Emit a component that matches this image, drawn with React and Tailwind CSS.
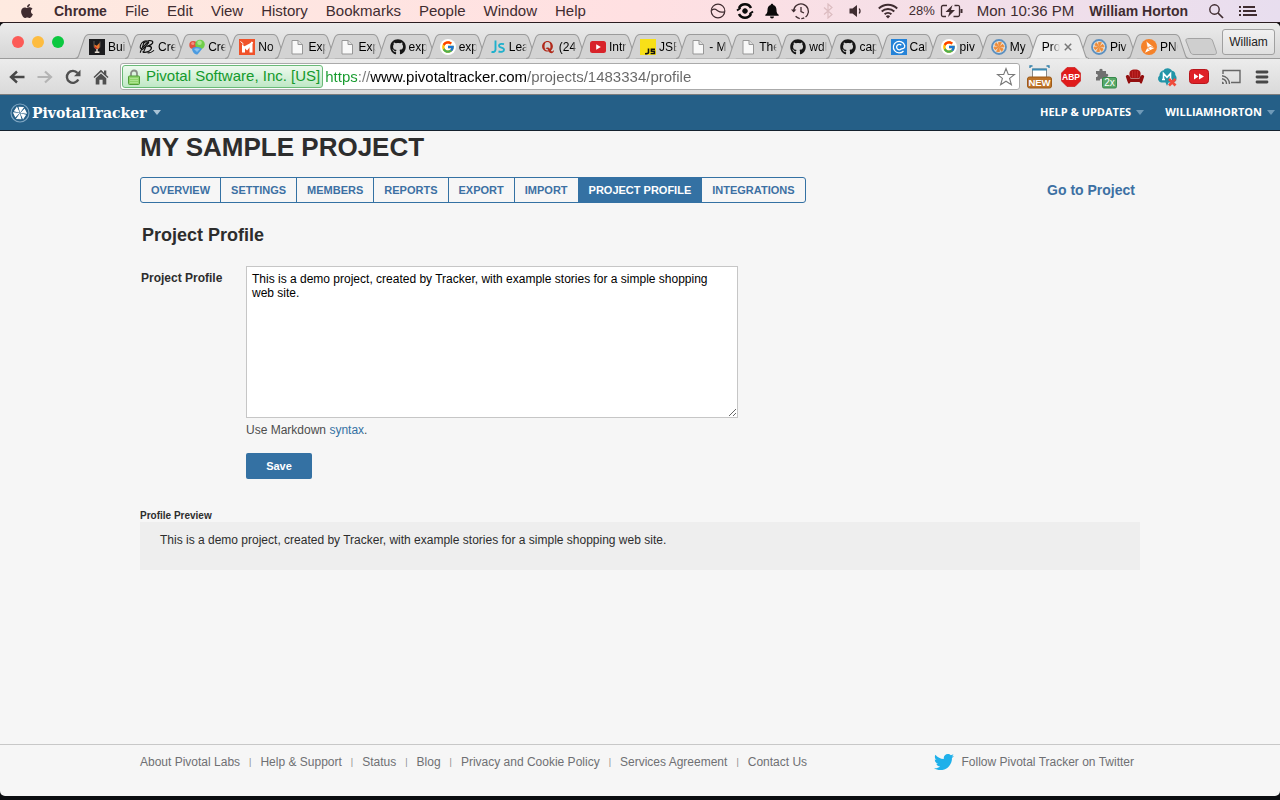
import { FaApple, FaGithub, FaTwitter, FaQuora } from "react-icons/fa";
import { FcGoogle } from "react-icons/fc";

/* ---------- favicons ---------- */

function WhiskyIcon() {
  return (
    <svg viewBox="0 0 16 16" className="size-4">
      <rect width="16" height="16" fill="#1c1c1e" />
      <path d="M5 2v5c0 1.800 1.200 3 3 3s3-1.200 3-3V2.500" fill="none" stroke="#6b6560" strokeWidth=".8" />
      <path d="M5.400 5.500l2.400 1.300 2.800-3v3.700c0 1.500-1 2.300-2.600 2.300s-2.600-.9-2.600-2.300z" fill="#e8762c" />
      <path d="M5.800 7.500l2 .9v1.500c-1.300 0-2-.8-2-2z" fill="#c9282a" />
      <path d="M8 10v2.500M5.800 13.200h4.600" stroke="#e6ddd2" strokeWidth="1.400" />
    </svg>
  );
}

function ScriptBIcon() {
  return (
    <svg viewBox="0 0 18 16" className="h-4 w-4.5" fill="none" stroke="#111" strokeLinecap="round">
      <path d="M8 1C5 1 2 4 1.500 7s1 3.500 3 1.500L9 3M6 1.500c-1 4-2.500 8-4.500 12.500" strokeWidth="1.300" />
      <path d="M6 3c3-2.500 9-3 9.500-.8S12 6.800 8.500 7.200c4-.6 6.500.6 5 3.300S7 15 4.500 13.500" strokeWidth="1.500" />
      <path d="M10.500 1.500L5 14M4 11l7-8M10 14.500c2 .5 4-.5 6.500-2.500" strokeWidth="1.200" />
    </svg>
  );
}

function BubblesIcon() {
  return (
    <svg viewBox="0 0 16 16" className="size-4">
      <circle cx="4.300" cy="6" r="4" fill="#e2513c" />
      <circle cx="11" cy="5.500" r="4.800" fill="#6fce4a" />
      <path d="M3 9.500c2-2 8-2 10 .5l-4.500 5.500C6 16 3 13 3 9.500z" fill="#4c9be0" />
      <circle cx="10.500" cy="3.800" r="2.300" fill="#a9e58c" />
      <circle cx="3.800" cy="4.500" r="1.600" fill="#f29180" />
      <path d="M5 10c1.500-1 4-1 6 0l-3 3z" fill="#8cc3f0" />
    </svg>
  );
}

function MonoMIcon() {
  return (
    <svg viewBox="0 0 16 16" className="size-4">
      <rect width="16" height="16" fill="#f0522a" />
      <path d="M3 13.500V5l3 3v5.500zM13.500 3v10.500h-3V8L8 10.500 5 7.500z" fill="#fff" />
      <path d="M6 8l2 2 5.500-7" fill="none" stroke="#fff" strokeWidth="2" />
      <path d="M1.500 2.500l3 2.500" stroke="#fff" strokeWidth="1" />
    </svg>
  );
}

function PageIcon() {
  return (
    <svg viewBox="0 0 16 16" className="size-4" fill="#f8f8f8" stroke="#979797">
      <path d="M3 1.500h6l4.500 4v9.500H3z" />
      <path d="M9 1.500v4h4.500" fill="#ddd" />
    </svg>
  );
}

function GoogleIcon() {
  return (
    <span className="flex size-4 items-center justify-center rounded-full bg-white">
      <FcGoogle className="size-3.5" />
    </span>
  );
}

function JsTealIcon() {
  return (
    <svg viewBox="0 0 16 16" className="size-4" fill="none" stroke="#1fb0cc" strokeWidth="1.900">
      <path d="M5.500 1.500v9c0 2-1.500 2.800-4 2.500" />
      <path d="M14 5.200c-3.500-.9-5 0-5 1.500 0 2.500 5 1.300 5 4 0 2-2.500 2.600-5.500 1.800" />
    </svg>
  );
}

function TubeIcon() {
  return (
    <svg viewBox="0 0 16 16" className="size-4">
      <rect y="2" width="16" height="12" rx="2.500" fill="#d8232a" />
      <path d="M6.200 5.300v5.400l4.600-2.700z" fill="#fff" />
    </svg>
  );
}

function JsYellowIcon() {
  return (
    <svg viewBox="0 0 16 16" className="size-4">
      <rect width="16" height="16" fill="#f8e018" />
      <path d="M8.500 9.500v4q0 1.200-3.500 1.200M15 10.200h-3.600v2h3v2.300h-3.800" fill="none" stroke="#111" strokeWidth="1.600" />
    </svg>
  );
}

function CloudCIcon() {
  return (
    <svg viewBox="0 0 16 16" className="size-4" fill="none" stroke="#fff">
      <rect width="16" height="16" fill="#2583d8" stroke="none" />
      <path d="M12.500 12a5.800 5.800 0 1 1 1.200-5.500c.3 2.300-1 3.300-3.500 3.300" strokeWidth="1.200" />
      <path d="M10.300 6.300a2.700 2.700 0 1 0 .2 3.400" strokeWidth="1.300" />
    </svg>
  );
}

const petalAngles = [0, 60, 120, 180, 240, 300];

function TrackerIcon() {
  return (
    <svg viewBox="0 0 16 16" className="size-4">
      <circle cx="8" cy="8" r="7" fill="#e6ded4" stroke="#5c90c0" strokeWidth="1.800" />
      {petalAngles.map((a) => (
        <path
          key={a}
          d="M8 7.500L6.800 3.600L9.600 3.200z"
          fill="#f08a35"
          stroke="#f08a35"
          strokeWidth=".8"
          transform={`rotate(${a + 10} 8 8)`}
        />
      ))}
    </svg>
  );
}

function PlayOrangeIcon() {
  return (
    <svg viewBox="0 0 16 16" className="size-4">
      <circle cx="8" cy="8" r="8" fill="#f5822a" />
      <path d="M5 2.300L13.500 9 4 13.800l2.300-5z" fill="#fff" />
      <path d="M6.300 8.800L9.500 7.500l4 1.500M6.300 8.800L5 2.300M6.300 8.800l2.500 2.500" fill="none" stroke="#f5822a" strokeWidth=".8" />
    </svg>
  );
}

const Octocat = () => <FaGithub className="size-4 text-[#161616]" />;
const QIcon = () => <FaQuora className="size-3.5 text-[#b12a1b]" />;

const browserTabs = [
  { title: "Bui", Icon: WhiskyIcon },
  { title: "Cre", Icon: ScriptBIcon },
  { title: "Cre", Icon: BubblesIcon },
  { title: "No", Icon: MonoMIcon },
  { title: "Exp", Icon: PageIcon },
  { title: "Exp", Icon: PageIcon },
  { title: "exp", Icon: Octocat },
  { title: "exp", Icon: GoogleIcon },
  { title: "Lea", Icon: JsTealIcon },
  { title: "(24", Icon: QIcon },
  { title: "Intr", Icon: TubeIcon },
  { title: "JSB", Icon: JsYellowIcon },
  { title: "- M", Icon: PageIcon },
  { title: "The", Icon: PageIcon },
  { title: "wdl", Icon: Octocat },
  { title: "cap", Icon: Octocat },
  { title: "Cal", Icon: CloudCIcon },
  { title: "piv", Icon: GoogleIcon },
  { title: "My", Icon: TrackerIcon },
  { title: "Pro", active: true },
  { title: "Piv", Icon: TrackerIcon },
  { title: "PNG", Icon: PlayOrangeIcon },
];

/* ---------- desktop menu bar ---------- */

const systemMenus = ["File", "Edit", "View", "History", "Bookmarks", "People", "Window", "Help"];

function MenuBar() {
  return (
    <div className="flex h-[23px] shrink-0 items-center justify-between border-b border-[#2a1c20] bg-linear-to-r from-[#feeae0] via-[#ffe0e2] to-[#e8deef] text-[#3f2c30]">
      <nav aria-label="Application menu" className="flex items-center gap-[18px] pl-[19px] text-[15px] leading-[22px]">
        <button aria-label="Apple" className="mr-px">
          <FaApple className="size-4" />
        </button>
        <button className="text-[14px] font-bold">Chrome</button>
        {systemMenus.map((m) => (
          <button key={m}>{m}</button>
        ))}
      </nav>
      <div className="flex items-center pr-[23px] text-[15px] leading-[22px]">
        <svg viewBox="0 0 16 16" className="mr-[10px] size-4" fill="none" stroke="currentColor" strokeWidth="1.200">
          <circle cx="8" cy="8" r="6.800" />
          <path d="M1.500 7.500c3-3 5-.5 6.500.5s4 1.500 6.500.8" />
        </svg>
        <svg viewBox="0 0 18 18" className="mr-[10px] size-[18px]" fill="none" stroke="#0a0a0a">
          <circle cx="9" cy="9" r="2.300" fill="#0a0a0a" />
          <path d="M3 6a6.700 6.700 0 0 1 12 0M15 12a6.700 6.700 0 0 1-12 0" strokeWidth="2.600" />
          <path d="M1 8.500l3.500-2.500M17 9.500L13.500 12" strokeWidth="2" />
        </svg>
        <svg viewBox="0 0 16 16" className="mr-[10px] size-4" fill="#0a0a0a">
          <path d="M8 .8c.9 0 1.300.6 1.300 1.300C11.800 2.800 12.500 5 12.500 7c0 2.500.7 3.600 2.200 4.800v.9H1.300v-.9C2.800 10.600 3.500 9.500 3.500 7c0-2 .7-4.200 3.200-4.900C6.700 1.400 7.100.8 8 .8zM6 13.500h4a2 2 0 0 1-4 0z" />
        </svg>
        <svg viewBox="0 0 20 18" className="mr-[12px] h-[18px] w-[20px]" fill="none" stroke="currentColor" strokeWidth="1.300">
          <path d="M3.600 9.500a7.400 7.400 0 1 1 2 4.800" strokeDasharray="30 1.500 3 1.500" />
          <path d="M1 7.500l2.600 3 2.800-3z" fill="currentColor" stroke="none" />
          <path d="M11 5v4.500l3 1.500" />
        </svg>
        <svg viewBox="0 0 12 16" className="mr-[14px] h-4 w-3" fill="none" stroke="#dcbcc0" strokeWidth="1.200">
          <path d="M2 4.500l8 7-4 3.500V1l4 3.500-8 7" />
        </svg>
        <svg viewBox="0 0 16 16" className="mr-[14px] size-4" fill="currentColor">
          <path d="M1.500 5.500h3L9 2v12l-4.500-3.500h-3z" />
          <path d="M11.200 5.500c1 1.500 1 3.500 0 5" fill="none" stroke="currentColor" strokeWidth="1.300" />
        </svg>
        <svg viewBox="0 0 20 16" className="mr-[11px] h-4 w-5" fill="none" stroke="currentColor" strokeWidth="1.900">
          <path d="M.8 5.500a13 13 0 0 1 18.400 0M3.700 8.500a9 9 0 0 1 12.600 0M6.600 11.300a5 5 0 0 1 6.800 0" />
          <path d="M7.800 13.200a3.200 3.200 0 0 1 4.400 0L10 15.500z" fill="currentColor" stroke="none" />
        </svg>
        <span className="mr-[5px] text-[13px]">28%</span>
        <svg viewBox="0 0 24 14" className="mr-[13px] h-[14px] w-6" fill="none" stroke="currentColor" strokeWidth="1.300">
          <path d="M7 1.500H3A1.500 1.500 0 0 0 1.500 3v8A1.500 1.500 0 0 0 3 12.500h3M14.500 1.500h3A1.500 1.500 0 0 1 19.500 3v8a1.500 1.500 0 0 1-1.500 1.500h-4.500" />
          <path d="M12.500 1L5.500 8h4l-1.500 5 7-7h-4z" fill="currentColor" stroke="none" />
          <path d="M21.500 5v4" strokeWidth="2" />
        </svg>
        <span className="mr-[15px]">Mon 10:36 PM</span>
        <button className="mr-[20px] text-[14px] font-bold">William Horton</button>
        <button aria-label="Spotlight" className="mr-[15px]">
          <svg viewBox="0 0 16 16" className="size-4" fill="none" stroke="currentColor" strokeWidth="1.400">
            <circle cx="6.500" cy="6.500" r="4.700" />
            <path d="M10 10l5 5" strokeWidth="1.700" />
          </svg>
        </button>
        <button aria-label="Notifications">
          <svg viewBox="0 0 18 12" className="h-3 w-[18px]" stroke="currentColor" strokeWidth="2">
            <path d="M0 2h2M4 2h12M0 6h2M4 6h13M0 10h2M4 10h14" />
          </svg>
        </button>
      </div>
    </div>
  );
}

/* ---------- browser chrome ---------- */

function BrowserTab({ title, Icon, active }) {
  return (
    <a href="#tab" className={active ? "relative z-10 flex h-[25px] min-w-0 flex-1 items-center" : "relative flex h-[25px] min-w-0 flex-1 items-center"}>
      <svg
        viewBox="0 0 62 25"
        preserveAspectRatio="none"
        className="absolute -left-1.5 top-0 h-full w-[calc(100%+12px)]"
        fill={active ? "#ececec" : "#d3d3d3"}
        stroke="#9b9b9b"
      >
        <path d="M0 24.500C2.500 24.500 3 23.500 3.500 22L9.500 4C10.500 1.500 11.500 .5 14 .5H48C50.500 .5 51.500 1.500 52.500 4L58.500 22C59 23.500 59.500 24.500 62 24.500" />
        {active && <path d="M1 25H61" stroke="#ececec" />}
      </svg>
      <span className="relative flex min-w-0 flex-1 items-center gap-[3px] pl-[8px] text-[12px] leading-[16px] text-black">
        {Icon && (
          <span className="flex size-4 shrink-0 items-center justify-center">
            <Icon />
          </span>
        )}
        <span
          className={
            active
              ? "ml-[1px] w-[18px] overflow-hidden whitespace-nowrap mask-r-from-50%"
              : "w-[18px] overflow-hidden whitespace-nowrap mask-r-from-75%"
          }
        >
          {title}
        </span>
        {active && (
          <svg viewBox="0 0 8 8" className="ml-px size-2" stroke="#777" strokeWidth="1.500">
            <path d="M.8 .8l6.400 6.400M7.200 .8L.8 7.200" />
          </svg>
        )}
      </span>
    </a>
  );
}

function TabStrip() {
  return (
    <div className="flex h-[36px] items-end border-b border-[#9b9b9b] bg-linear-to-b from-[#ebebeb] to-[#d6d6d6]">
      <div className="flex w-[81px] shrink-0 items-center gap-[8px] self-stretch pl-[12px] pt-[3px]">
        <button aria-label="Close" className="size-3 rounded-full bg-[#fc5b57]" />
        <button aria-label="Minimize" className="size-3 rounded-full bg-[#fdbc40]" />
        <button aria-label="Zoom" className="size-3 rounded-full bg-[#0cc840]" />
      </div>
      <nav aria-label="Browser tabs" className="-mb-px flex min-w-0 flex-1">
        {browserTabs.map((t, i) => (
          <BrowserTab key={i} {...t} />
        ))}
      </nav>
      <button aria-label="New tab" className="ml-[2px] shrink-0 pb-[3px]">
        <svg viewBox="0 0 32 17" className="h-[17px] w-8" fill="#cfcfcf" stroke="#a3a3a3">
          <path d="M4 .5h20c2 0 3 .7 3.700 2.500l3.600 10.500c.6 2-.3 3-2 3H9c-2 0-3-.8-3.700-2.500L1 3C.4 1.200 1.500 .5 4 .5z" />
        </svg>
      </button>
      <button className="ml-[5px] mr-[5px] mt-[6px] h-[26px] w-[53px] shrink-0 self-start rounded-[3px] border border-[#a0a0a0] bg-linear-to-b from-[#f1f1f1] to-[#e0e0e0] text-[12px] text-[#222]">
        William
      </button>
    </div>
  );
}

function ExtensionIcons() {
  return (
    <div className="flex shrink-0 items-center gap-[8px] pl-[7px] pr-[11px]">
      <button aria-label="Window resizer">
        <svg viewBox="0 0 26 24" className="h-6 w-[26px]">
          <path d="M3 3V1h2.500M19.500 1H22v2" fill="none" stroke="#2f7da8" strokeWidth="1.300" />
          <path d="M5.500 12V4h14v8" fill="#fff" stroke="#888" />
          <path d="M5 4.500h15" stroke="#3a8bb5" strokeWidth="2.200" />
          <rect x=".5" y="12" width="24" height="11" rx="2" fill="#bd7328" stroke="#9d5b18" />
          <text x="12.500" y="21" textAnchor="middle" fontSize="9.500" fontWeight="bold" fontFamily="Liberation Sans, sans-serif" fill="#fff">NEW</text>
        </svg>
      </button>
      <button aria-label="Ad blocker">
        <svg viewBox="0 0 20 20" className="size-5">
          <path d="M6 .5h8l5.500 5.500v8L14 19.500H6L.5 14V6z" fill="#e01b1b" stroke="#c40f0f" strokeWidth=".6" />
          <text x="10" y="13.200" textAnchor="middle" fontSize="8.500" fontWeight="bold" fontFamily="Liberation Sans, sans-serif" fill="#fff">ABP</text>
        </svg>
      </button>
      <button aria-label="Speed" className="ml-[6px]">
        <svg viewBox="0 0 22 24" className="h-6 w-[22px]">
          <path d="M1 6h3.500c-1-3 4-3 3 0h3.500v3c3-1 3 3.500 0 3v3.500H8c1-2.500-4-2.500-3 0H1V12c2.500.5 2.500-3.500 0-3z" fill="#707070" />
          <rect x="7.500" y="12.500" width="14" height="10.500" rx="1.500" fill="#58a868" stroke="#35884a" />
          <text x="14.500" y="21" textAnchor="middle" fontSize="10" fontFamily="Liberation Sans, sans-serif" fill="#fff">2x</text>
        </svg>
      </button>
      <button aria-label="Couch">
        <svg viewBox="0 0 20 20" className="size-5" fill="#a81414">
          <path d="M4.500 8C4 4 6 2.500 10 2.500s6 1.500 5.500 5.500l-1 3h-9z" />
          <path d="M.8 9.500C1 7.300 4.500 7.300 5 10l.5 1.500h9L15 10c.5-2.700 4-2.700 4.200-.5l-1.500 4.500-1 2.500h-1.200L14.500 15h-9l-1 1.500H3.300L2.300 14z" fill="#930e0e" />
          <path d="M7.500 4v6.500M10 3.500v7M12.500 4v6.500" stroke="#c83030" strokeWidth=".7" />
        </svg>
      </button>
      <button aria-label="Cloud" className="ml-[3px]">
        <svg viewBox="0 0 22 20" className="h-5 w-[22px]">
          <path d="M5 15.500a4 4 0 0 1-1.500-7C3.500 5 6 3.500 7.500 3.500 9 .5 14.500.3 16 3.800c2.500.4 3.500 2 3.300 4.200 2.200 2 1.700 7-2.300 7.500h-4.500L11 19l-1.500-3.500z" fill="#2395a8" />
          <path d="M7.500 12.500V6.500l3.500 3.800 3.500-3.800v6M6 12.500h3M13 12.500h3" fill="none" stroke="#fff" strokeWidth="1.600" />
          <path d="M13 12l6.500 6.500M19.500 12L13 18.500" stroke="#f04c3c" strokeWidth="2.700" />
        </svg>
      </button>
      <button aria-label="Fast forward" className="ml-[3px]">
        <svg viewBox="0 0 20 16" className="h-4 w-5">
          <rect x=".5" y=".5" width="19" height="14" rx="3" fill="#df2127" stroke="#b8151b" />
          <path d="M5 4.500v6L9.500 7.500zM10 4.500v6L15 7.500z" fill="#fff" />
        </svg>
      </button>
      <button aria-label="Cast" className="ml-[4px]">
        <svg viewBox="0 0 20 16" className="h-4 w-5" fill="none" stroke="#666" strokeWidth="1.400">
          <path d="M2 5V1.500h17v12h-9" />
          <path d="M1 6.700a8.300 8.300 0 0 1 7.500 8.300M1 9.700a5.300 5.300 0 0 1 4.500 5.300" />
          <path d="M1 15v-2.500a2.500 2.500 0 0 1 2 2.500z" fill="#666" stroke="none" />
        </svg>
      </button>
      <button aria-label="Chrome menu" className="ml-[6px]">
        <svg viewBox="0 0 14 14" className="size-3.5" stroke="#484848" strokeWidth="2.800" strokeLinecap="round">
          <path d="M2 2h10M2 7h10M2 12h10" />
        </svg>
      </button>
    </div>
  );
}

function Toolbar() {
  return (
    <div className="flex h-[36px] items-center border-b border-[#7d7d7d] bg-linear-to-b from-[#ececec] to-[#dadada]">
      <div className="flex w-[120px] shrink-0 items-center gap-[12px] pl-[9px]">
        <button aria-label="Back">
          <svg viewBox="0 0 16 16" className="size-4" fill="none" stroke="#484848" strokeWidth="2.400">
            <path d="M15.500 8H3M8 2.500L2 8l6 5.500" />
          </svg>
        </button>
        <button aria-label="Forward">
          <svg viewBox="0 0 16 16" className="size-4" fill="none" stroke="#b4b4b4" strokeWidth="2.200">
            <path d="M.5 8H13M8 2.500l6 5.500-6 5.500" />
          </svg>
        </button>
        <button aria-label="Reload">
          <svg viewBox="0 0 16 16" className="size-4" fill="none" stroke="#505050" strokeWidth="2.400">
            <path d="M13.300 10.500A6 6 0 1 1 12.500 4" />
            <path d="M15.500 .8v6.500H9z" fill="#505050" stroke="none" />
          </svg>
        </button>
        <button aria-label="Home">
          <svg viewBox="0 0 16 16" className="size-4" fill="#505050">
            <path d="M8 .8l3 2.900V1.500h2.300v4.400L15.500 8l-1 1.100L8 3 1.500 9.100.5 8z" />
            <path d="M2.700 9.300L8 4.400l5.300 4.900v6.200H9.600v-4.700H6.400v4.700H2.700z" />
          </svg>
        </button>
      </div>
      <div className="flex h-[27px] min-w-0 flex-1 items-center rounded-[3px] border border-[#aaa] bg-white pl-px pr-[3px]">
        <button className="flex h-[23px] shrink-0 items-center gap-[6px] rounded-[3px] border border-[#6aba78] bg-linear-to-b from-[#eefaef] to-[#bfe8c6] pl-[5px] pr-[2px] text-[15px] text-[#149a2c]">
          <svg viewBox="0 0 12 16" className="h-4 w-3">
            <path d="M3 8V4.500a3 3 0 0 1 6 0V8" fill="none" stroke="#8a8f88" strokeWidth="1.800" />
            <rect x=".5" y="7" width="11" height="8.500" rx="1" fill="#8fd46c" stroke="#519e38" />
            <path d="M2 9.500h8M2 11.500h8M2 13.500h8" stroke="#b5e89a" strokeWidth=".8" />
          </svg>
          Pivotal Software, Inc. [US]
        </button>
        <input
          aria-label="Address"
          defaultValue="https://www.pivotaltracker.com/projects/1483334/profile"
          className="ml-[2px] min-w-0 flex-1 bg-clip-text text-[15px] leading-[20px] text-transparent outline-none [background-image:linear-gradient(to_right,#149a2c_32px,#777_32px,#777_45px,#000_45px,#000_202px,#666_202px)]"
        />
        <button aria-label="Bookmark">
          <svg viewBox="0 0 20 20" className="size-5" fill="#fff" stroke="#7a7a7a" strokeWidth="1.100">
            <path d="M10 1.500l2.300 6h6.200l-4.900 3.900 1.800 6.400L10 14.200l-5.400 3.600 1.800-6.400L1.500 7.500h6.200z" />
          </svg>
        </button>
      </div>
      <ExtensionIcons />
    </div>
  );
}

/* ---------- page ---------- */

function Caret({ className }) {
  return (
    <svg viewBox="0 0 8 5" className={className}>
      <path d="M0 0h8L4 5z" fill="currentColor" />
    </svg>
  );
}

function SiteHeader() {
  return (
    <header className="flex h-[36px] shrink-0 items-center justify-between border-b border-[#15222e] bg-[#255f87] text-white">
      <button className="flex items-center pl-[10px]">
        <svg viewBox="0 0 20 20" className="mr-[2px] size-5">
          <circle cx="10" cy="10" r="9" fill="none" stroke="#7fa6c2" strokeWidth="1.200" />
          {petalAngles.map((a) => (
            <path
              key={a}
              d="M10 8.500L8 4.600L12 4z"
              fill="#fff"
              stroke="#fff"
              strokeWidth="1"
              transform={`rotate(${a + 12} 10 10)`}
            />
          ))}
        </svg>
        <span className="font-['DejaVu_Serif',serif] text-[14px] font-bold leading-[20px]">PivotalTracker</span>
        <Caret className="ml-[6px] h-[5px] w-2 text-[#a9c3d6]" />
      </button>
      <nav aria-label="Account" className="flex items-center gap-[21px] pr-[5px] font-['Open_Sans',sans-serif] text-[11px] font-bold">
        <button className="flex items-center gap-[5px]">
          HELP &amp; UPDATES
          <Caret className="h-[5px] w-2 text-[#6f9ab8]" />
        </button>
        <button className="flex items-center gap-[5px]">
          WILLIAMHORTON
          <Caret className="h-[5px] w-2 text-[#6f9ab8]" />
        </button>
      </nav>
    </header>
  );
}

const sections = ["Overview", "Settings", "Members", "Reports", "Export", "Import", "Project Profile", "Integrations"];

function SectionNav() {
  return (
    <nav aria-label="Project sections" className="flex h-[26px] overflow-hidden rounded-[3px] border border-[#3471a3] text-[11px] font-bold uppercase leading-[24px]">
      {sections.map((s) => (
        <a
          key={s}
          href="#section"
          className={
            s === "Project Profile"
              ? "border-r border-[#3471a3] bg-[#3471a3] px-[10px] text-white"
              : "border-r border-[#3471a3] px-[10px] text-[#3c70a3] last:border-r-0"
          }
        >
          {s}
        </a>
      ))}
    </nav>
  );
}

const footerLinks = [
  "About Pivotal Labs",
  "Help & Support",
  "Status",
  "Blog",
  "Privacy and Cookie Policy",
  "Services Agreement",
  "Contact Us",
];

function SiteFooter() {
  return (
    <footer className="border-t border-[#c8c8c8] pb-[24px] pt-[7px] text-[12px] leading-[20px] text-[#6f7073]">
      <div className="mx-auto flex w-full max-w-[1000px] items-center justify-between pr-[6px]">
        <ul className="flex">
          {footerLinks.map((l, i) => (
            <li key={l} className="flex">
              {i > 0 && <span aria-hidden="true" className="mx-[9px] text-[9px] text-[#8c8c8c]">|</span>}
              <a href="#link">{l}</a>
            </li>
          ))}
        </ul>
        <a href="#twitter" className="flex items-center gap-[7px]">
          <FaTwitter className="size-5 text-[#1fb0ea]" />
          Follow Pivotal Tracker on Twitter
        </a>
      </div>
    </footer>
  );
}

const profileText = "This is a demo project, created by Tracker, with example stories for a simple shopping web site.";

function ProfilePage() {
  return (
    <main className="mx-auto w-full max-w-[1000px] flex-1 text-[12px] leading-[16px] text-[#2d2d2d]">
      <h1 className="text-[26px] font-bold leading-[32px]">MY SAMPLE PROJECT</h1>
      <div className="mt-[14px] flex items-center justify-between pr-[5px]">
        <SectionNav />
        <a href="#project" className="text-[14px] font-bold text-[#3c70a3]">
          Go to Project
        </a>
      </div>
      <h2 className="ml-[2px] mt-[20px] text-[18px] font-bold leading-[24px]">Project Profile</h2>
      <form className="mt-[19px] flex" onSubmit={(e) => e.preventDefault()}>
        <label htmlFor="profile" className="w-[106px] shrink-0 pl-px pt-[4px] font-bold">
          Project Profile
        </label>
        <div className="flex flex-col items-start">
          <textarea
            id="profile"
            defaultValue={profileText}
            className="block h-[152px] w-[492px] resize border border-[#c6c6c6] bg-white p-[5px] leading-[14px] text-black outline-none"
          />
          <p className="mt-[4px] text-[#4d4d4d]">
            Use Markdown{" "}
            <a href="#syntax" className="text-[#3471a3]">
              syntax
            </a>
            .
          </p>
          <button className="mt-[15px] h-[26px] w-[66px] rounded-[2px] bg-[#3471a3] text-[11px] font-bold text-white">Save</button>
        </div>
      </form>
      <h3 className="mt-[31px] text-[10px] font-bold leading-[12px]">Profile Preview</h3>
      <div className="bg-[#eeeeee] px-[20px] pb-[22px] pt-[10px]">
        <p>{profileText}</p>
      </div>
    </main>
  );
}

export default function App() {
  return (
    <div className="flex min-h-screen flex-col bg-[#0c0e11] pb-[4px] font-['Liberation_Sans',Arial,sans-serif]">
      <MenuBar />
      <div className="flex flex-1 flex-col overflow-hidden rounded-[5px] bg-[#f6f6f6]">
        <TabStrip />
        <Toolbar />
        <SiteHeader />
        <ProfilePage />
        <SiteFooter />
      </div>
    </div>
  );
}
